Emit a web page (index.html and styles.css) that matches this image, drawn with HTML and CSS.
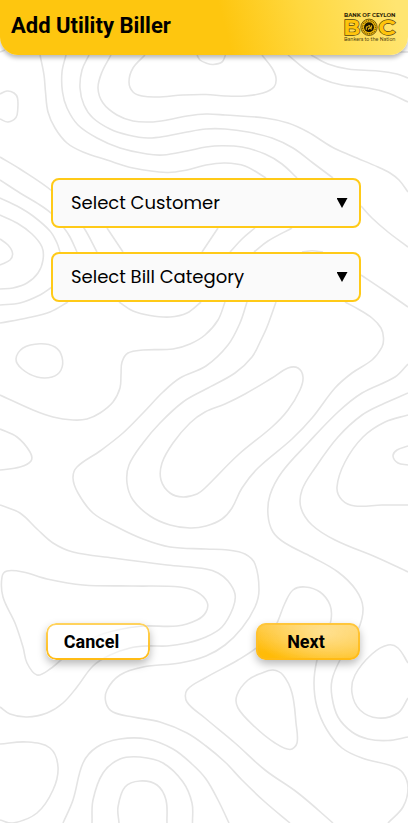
FILE: index.html
```html
<!DOCTYPE html>
<html lang="en">
<head>
<meta charset="utf-8">
<title>Add Utility Biller</title>
<link rel="stylesheet" href="styles.css">
</head>
<body>
<main class="screen">
  <svg class="contours" viewBox="0 0 408 823" aria-hidden="true"></svg>
  <header class="header">
    <h1 class="title">Add Utility Biller</h1>
    <svg class="logo" viewBox="0 0 52 32" role="img" aria-label="Bank of Ceylon">
      <text class="logo-name" x="0" y="5.4" textLength="51.5" lengthAdjust="spacingAndGlyphs">BANK OF CEYLON</text>
      <text class="logo-letter" x="-.8" y="23" textLength="17" lengthAdjust="spacingAndGlyphs">B</text>
      <text class="logo-letter" x="34.3" y="23" textLength="17.3" lengthAdjust="spacingAndGlyphs">C</text>
      <circle class="ring" cx="25" cy="15.3" r="8.2"/>
      <circle class="ring-dots" cx="25" cy="15.3" r="6.5"/>
      <circle class="core" cx="25" cy="15.3" r="5"/>
      <path class="lion" d="M22.3 17.8v-3h1.7l.6-1.2h1.2v2h1.8v-2.2M24.5 17.7v-1.4h2.7v1.4"/>
      <text class="logo-tag" x="0" y="29" textLength="51.5" lengthAdjust="spacingAndGlyphs">Bankers to the Nation</text>
    </svg>
  </header>
  <form class="form">
    <button type="button" class="select"><span>Select Customer</span><i class="arrow"></i></button>
    <button type="button" class="select"><span>Select Bill Category</span><i class="arrow"></i></button>
  </form>
  <footer class="actions">
    <button type="button" class="btn cancel">Cancel</button>
    <button type="button" class="btn next">Next</button>
  </footer>
</main>
<script src="contours.js"></script>
</body>
</html>
```
FILE: styles.css
```css
* { box-sizing: border-box; }
body { margin: 0; background: #fff; }
.screen {
  position: relative;
  display: flex;
  flex-direction: column;
  width: 408px;
  height: 823px;
  overflow: hidden;
  font-family: Roboto, "Liberation Sans", sans-serif;
}
.contours {
  position: absolute;
  inset: 0;
  width: 408px;
  height: 823px;
  fill: none;
  stroke: #e4e4e4;
  stroke-width: 1.6;
}
.header {
  position: relative;
  display: flex;
  justify-content: space-between;
  height: 55px;
  padding: 12px 12px 0 11px;
  border-radius: 0 0 18px 18px;
  background: linear-gradient(75deg, #fec60f 55%, #ffd83f 74%, #ffe571 97%);
  box-shadow: 0 3px 4px rgba(0, 0, 0, .27);
}
.title {
  margin: 0;
  font-size: 22px;
  line-height: 27px;
  font-weight: 700;
  white-space: nowrap;
}
.logo { width: 52px; height: 32px; overflow: visible; font-family: Montserrat, Poppins, Inter, sans-serif; }
.logo-name { font-size: 6px; font-weight: 700; fill: #2b2205; }
.logo-letter {
  font-size: 21.5px;
  font-weight: 700;
  fill: #ffc40c;
  stroke: #51400a;
  stroke-width: 1.3;
  paint-order: stroke;
}
.ring { fill: #ffc40c; stroke: #51400a; stroke-width: .8; }
.ring-dots { fill: none; stroke: #705706; stroke-width: 1.5; stroke-dasharray: 1 .8; }
.core { fill: #1c1602; }
.lion { fill: none; stroke: #f4be16; stroke-width: 1; }
.logo-tag { font-size: 5px; font-weight: 500; fill: #51430f; }
.form {
  position: relative;
  display: flex;
  flex-direction: column;
  gap: 24px;
  margin: 123px 47px 0 51px;
}
.select {
  display: flex;
  align-items: center;
  justify-content: space-between;
  height: 50px;
  padding: 0 11.5px 1px 18px;
  border: 2px solid #ffca18;
  border-radius: 8px;
  background: #fafafa;
  color: #000;
  font: 400 18px Poppins, Inter, sans-serif;
}
.arrow {
  width: 11px;
  height: 10px;
  margin-top: 1px;
  background: #000;
  clip-path: polygon(0 0, 100% 0, 50% 100%);
}
.actions {
  position: relative;
  display: flex;
  justify-content: space-between;
  margin: 321px 48px 0 46px;
}
.btn {
  position: relative;
  width: 104px;
  height: 37px;
  padding: 0;
  border: 0;
  border-radius: 10px;
  color: #000;
  font: 700 18px/37px Roboto, sans-serif;
  box-shadow: 0 4px 8px rgba(0, 0, 0, .28);
}
.btn::before {
  content: "";
  position: absolute;
  inset: 0;
  padding: 2px;
  border-radius: 10px;
  background: linear-gradient(#ffd35f, #ffbb13);
  mask: linear-gradient(#000 0 0) content-box exclude, linear-gradient(#000 0 0);
}
.cancel { padding-right: 13px; background: linear-gradient(100deg, #fff 35%, rgba(255, 255, 255, 0)); }
.next {
  padding-right: 4px;
  background:
    radial-gradient(70px 36px at 66% 25%, rgba(255, 226, 150, .9), rgba(255, 220, 130, 0)),
    linear-gradient(190deg, rgba(255, 208, 92, .95) 10%, rgba(255, 185, 0, .97) 85%);
}
.next::before { background: linear-gradient(#ffc63c, #ffba14); }
```
FILE: contours.js
```js
// Each contour is a flat list of x,y points; closed contours are marked.
const contours = [
  [[40,55, 44,75, 45.5,92, 48,112, 55,128, 67,143, 83,152, 107,160, 133,168, 167,172.5, 187,170, 206,165, 225,163, 245,166, 266,178]],
  [[66,55, 62,72, 62.5,92, 67,108, 78,125, 97,138, 120,148, 147,154, 163,155, 187,151, 206,147, 222,145.7, 242,147, 265,154, 282,164, 297,178]],
  [[89,55, 82,70, 80,88, 84,105, 93,118, 110,129, 128,135, 148,138, 167,136, 187,132, 206,129, 225,129, 248,132, 272,138, 293,148, 313,163, 333,178]],
  [[111,55, 102,72, 98,88, 103,103, 117,115, 133,121, 150,122, 167,120, 187,116, 206,114, 225,115, 265,118, 288,123, 308,132, 332,147, 352,156, 378,167, 390,173, 399,180, 408,192]],
  [[145,55, 133,68, 129,82, 133,92, 142,96, 157,97, 183,95, 206,94.5, 225,96, 245,96, 263,93, 274,87, 276,78, 272,68, 262,55]],
  [[197,55, 200,60, 206,63, 213,64.5, 222,62, 225.5,55]],
  [[288,55, 305,69, 322,79, 342,85, 368,88, 388,93, 408,102]],
  [[311,55, 328,64, 348,69, 378,71, 397,74, 408,78]],
  [[394,52, 408,52]],
  [[0,52, 5,50]],
  [[0,94, 7,91, 14,93, 17.5,98, 17.7,110, 16,117.5, 8,122, 0,119]],
  [[0,157, 20,169, 52,191, 70,210, 84,228, 97,252]],
  [[0,180, 20,193, 40,205, 52,214, 64,228, 70,237, 77,252]],
  [[0,198, 17,206, 33,216, 50,231, 57,243, 60,252]],
  [[0,215, 17,223, 32,234, 42,247, 43,260, 38,273, 27,283, 13,288, 0,289]],
  [[0,239, 8,245, 12.5,253, 10,260, 0,265]],
  [[0,305, 20,303, 40,295, 52,287]],
  [[0,323, 27,318, 50,312, 68,302]],
  [[107,228, 123,252]],
  [[202,252, 206,246, 218,228]],
  [[230,252, 242,239, 255,228]],
  [[254,252, 268,241, 292,228]],
  [[302,252, 312,250.8, 323,252]],
  [[361,206, 372,218, 388,232, 408,247]],
  [[361,275, 382,289, 408,307]],
  [[119,302, 133,311, 150,315.5, 170,317, 187,313, 201,302]],
  [[225,302, 218,320, 205,335, 190,344, 173,349, 143,350, 128,353, 122,362, 121,375, 120,388, 113,402, 100,413, 87,419, 73,420, 53,417, 33,410, 0,395]],
  [[247,302, 240,323, 228,345, 206,366, 180,378, 163,392, 143,413, 123,433, 100,451, 77,467, 73,478, 78,493, 93,513, 117,527, 143,539, 170,547, 206,549, 228,550, 245,554, 255,564, 259,590, 255,607, 242,628, 225,645, 206,656, 180,663, 143,667, 120,675, 107,690, 106,703, 113,712, 133,717, 160,722, 187,733, 206,746, 225,762, 242,780, 265,802, 290,823]],
  [[276,302, 267,327, 261,340, 252,357, 235,373, 206,389, 183,402, 160,423, 143,443, 129,465, 127,483, 133,500, 150,516, 170,525, 190,528, 206,526, 222,519, 232,508, 242,488, 258,468, 292,439, 312,418, 335,388, 352,373, 372,360, 382,347, 383.5,338, 381,328, 372,318, 358,309, 345,302]],
  [[205,412, 190,423, 173,443, 162,463, 161,480, 170,493, 183,497, 197,494, 205,488, 238,455, 272,427, 288,410, 300,390, 303,377, 298,368, 288,368, 272,378, 245,394, 225,404], true],
  [[408,364, 395,377, 362,393, 338,412, 308,443, 282,472, 270,495, 268,515, 273,532, 285,543, 312,557, 338,572, 356,590, 363,608, 358,630, 340,660, 332,680, 332,697, 338,717, 352,732, 368,739, 388,740.5, 408,737]],
  [[408,393, 385,403, 362,415, 338,437, 315,468, 302,490, 301,508, 312,525, 335,540, 378,558, 408,572]],
  [[408,415, 385,422, 363,437, 345,462, 337,487, 342,500, 355,506, 382,505, 408,505]],
  [[408,446, 397,450, 393,456, 398,463, 408,465]],
  [[40,343.7, 55,347, 62,357, 61,370, 52,377, 37,377, 22,369, 16,359, 23,348], true],
  [[0,429, 17,437, 30,452, 31,461, 20,467, 0,470]],
  [[0,505, 20,513, 37,529, 53,543, 73,552, 113,558, 167,565, 206,569, 218,573, 228,581, 235,594, 233,608, 222,627, 206,637, 187,643, 167,646, 147,646, 130,648, 110,655, 93,666, 77,687, 63,703, 47,713, 27,717, 10,714, 0,707]],
  [[2,577, 7,571, 23,572, 47,579, 83,585, 133,586, 180,587, 197,592, 207,602, 206,612, 197,620, 177,626, 143,626, 117,630, 93,638, 67,655, 50,669, 37,675, 27,663, 23,647, 15,623, 3,597], true],
  [[388,823, 403,807, 408,788, 403,773, 392,766, 362,758, 342,748, 327,730, 317,707, 314,683, 317,660, 325,637, 331,620, 330,605, 320,592, 305,587, 293,590, 285,603, 275,627, 260,645, 238,660, 205,678, 187,690, 187,702, 205,718, 235,743, 265,770, 298,793, 333,823]],
  [[273,670, 283,675, 292,693, 296,723, 297,743, 290,749.5, 275,743, 255,727, 238,708, 237,695, 248,680, 262,673], true],
  [[408,663, 398,648, 388,645, 372,654, 355,675, 352,693, 360,710, 378,718, 398,713, 408,698]],
  [[0,744, 27,742, 50,748, 58,767, 53,790, 37,813, 13,823, 0,820]],
  [[63,823, 73,800, 83,763, 97,747, 120,739, 147,739, 173,749, 193,765, 206,779, 218,800, 229,823]],
  [[92,823, 93,800, 103,773, 120,759, 140,757, 163,763, 183,782, 192,803, 192.5,823]],
  [[119,823, 118,807, 125,787, 140,781, 157,785, 166,800, 167,823]]
];

// Cardinal spline whose tangents are scaled by the length of each span.
function smooth(flat, closed) {
  const p = [];
  for (let i = 0; i < flat.length; i += 2) p.push([flat[i], flat[i + 1]]);
  const n = p.length;
  const at = i => closed ? p[(i + n) % n] : p[Math.max(0, Math.min(n - 1, i))];
  const dist = (a, b) => Math.hypot(b[0] - a[0], b[1] - a[1]);
  const tangent = i => {
    const a = at(i - 1), b = at(i + 1), l = dist(a, at(i)) + dist(at(i), b);
    return [(b[0] - a[0]) / l, (b[1] - a[1]) / l];
  };
  let d = `M${p[0]}`;
  for (let i = 0; i < (closed ? n : n - 1); i++) {
    const a = at(i), b = at(i + 1), k = dist(a, b) / 2.8, s = tangent(i), e = tangent(i + 1);
    d += `C${a[0] + s[0] * k},${a[1] + s[1] * k} ${b[0] - e[0] * k},${b[1] - e[1] * k} ${b}`;
  }
  return d + (closed ? "Z" : "");
}

const svg = document.querySelector(".contours");
for (const [points, closed] of contours) {
  const path = document.createElementNS("http://www.w3.org/2000/svg", "path");
  path.setAttribute("d", smooth(points, closed));
  svg.append(path);
}
```
